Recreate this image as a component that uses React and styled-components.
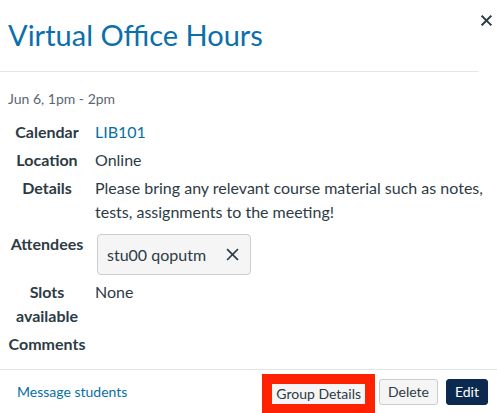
import React from "react";
import styled, { createGlobalStyle } from "styled-components";

const Global = createGlobalStyle`
  html, body { margin: 0; padding: 0; background: #fff; }
  body { font-family: Lato, "Noto Sans", sans-serif; color: #2d3b45; }
  * { box-sizing: border-box; }
`;

const Popover = styled.div`
  position: relative;
  width: 497px;
  height: 413px;
  overflow: hidden;
  display: flex;
  flex-direction: column;
`;

const CloseButton = styled.button`
  position: absolute;
  top: 14px;
  right: 4px;
  width: 13px;
  height: 13px;
  padding: 0;
  border: 0;
  background: none;
  display: flex;
  align-items: center;
  justify-content: center;
  color: #2d3b45;
`;

const Header = styled.header`
  margin-right: 19px;
  padding: 16px 8px 0;
  height: 72px;
  border-bottom: 1px solid #e3e6e8;
`;

const Title = styled.h2`
  margin: 0;
  font-size: 29px;
  font-weight: 400;
  line-height: 38px;
  color: #0b6fab;
`;

const Body = styled.div`
  flex: 1;
  padding: 17px 8px 0;
`;

const When = styled.div`
  font-size: 14px;
  line-height: 20px;
  color: #5b6770;
  margin-bottom: 9px;
`;

const Grid = styled.div`
  display: grid;
  grid-template-columns: 78px 1fr;
  column-gap: 9px;
  align-items: start;
`;

const Label = styled.div`
  font-weight: 700;
  font-size: 16px;
  line-height: 24px;
  text-align: center;
  white-space: nowrap;
  padding: ${(p) => p.$pad || "2px 0"};
`;

const Value = styled.div`
  font-size: 16px;
  line-height: 24px;
  padding: ${(p) => p.$pad || "2px 0"};
`;

const Link = styled.a`
  color: #0770a3;
  text-decoration: none;
  cursor: pointer;
`;

const Chip = styled.div`
  display: inline-flex;
  align-items: center;
  gap: 20px;
  height: 41px;
  padding: 0 11px 0 9px;
  margin-left: 2px;
  background: #f5f5f5;
  border: 1px solid #c7cdd1;
  border-radius: 4px;
  font-size: 16px;
  color: #2d3b45;
`;

const ChipRemove = styled.span`
  display: flex;
  width: 13px;
  height: 13px;
`;

const Footer = styled.footer`
  height: 44px;
  border-top: 1px solid #e3e6e8;
  display: flex;
  align-items: center;
  justify-content: space-between;
  padding: 0 9px 0 17px;
`;

const FooterLink = styled(Link)`
  font-size: 14px;
`;

const Actions = styled.div`
  display: flex;
  align-items: center;
  gap: 8px;
`;

const Highlight = styled.div`
  border: 10px solid #ff2200;
  border-bottom-width: 11px;
  margin-top: 6px;
  margin-right: -4px;
  display: flex;
`;

const Button = styled.button`
  font-family: Lato, "Noto Sans", sans-serif;
  font-size: 14px;
  line-height: 20px;
  height: ${(p) => (p.$flat ? "20px" : "26px")};
  padding: ${(p) => (p.$flat ? "0 4px" : "0 8px")};
  border: ${(p) =>
    p.$flat ? "0" : p.$primary ? "1px solid #0c2a4f" : "1px solid #c7cdd1"};
  background: ${(p) => (p.$primary ? "#0c2a4f" : "#f5f5f5")};
  color: ${(p) => (p.$primary ? "#fff" : "#2d3b45")};
  border-radius: ${(p) => (p.$flat ? "0" : "3px")};
`;

const XIcon = ({ size = 12, stroke = 2 }) => (
  <svg width={size} height={size} viewBox="0 0 12 12" fill="none">
    <path
      d="M1.5 1.5 L10.5 10.5 M10.5 1.5 L1.5 10.5"
      stroke="currentColor"
      strokeWidth={stroke}
      strokeLinecap="square"
    />
  </svg>
);

export default function App() {
  return (
    <>
      <Global />
      <Popover>
        <CloseButton aria-label="Close">
          <XIcon size={11} stroke={2.2} />
        </CloseButton>
        <Header>
          <Title>Virtual Office Hours</Title>
        </Header>
        <Body>
          <When>Jun 6, 1pm - 2pm</When>
          <Grid>
            <Label>Calendar</Label>
            <Value>
              <Link>LIB101</Link>
            </Value>
            <Label>Location</Label>
            <Value>Online</Value>
            <Label>Details</Label>
            <Value>
              Please bring any relevant course material such as notes, tests,
              assignments to the meeting!
            </Value>
            <Label $pad="6px 0 0">Attendees</Label>
            <Value $pad="8px 0 3px">
              <Chip>
                stu00 qoputm
                <ChipRemove>
                  <XIcon size={13} stroke={1.5} />
                </ChipRemove>
              </Chip>
            </Value>
            <Label>
              Slots
              <br />
              available
            </Label>
            <Value>None</Value>
            <Label>Comments</Label>
            <Value></Value>
          </Grid>
        </Body>
        <Footer>
          <FooterLink>Message students</FooterLink>
          <Actions>
            <Highlight>
              <Button $flat>Group Details</Button>
            </Highlight>
            <Button>Delete</Button>
            <Button $primary>Edit</Button>
          </Actions>
        </Footer>
      </Popover>
    </>
  );
}
